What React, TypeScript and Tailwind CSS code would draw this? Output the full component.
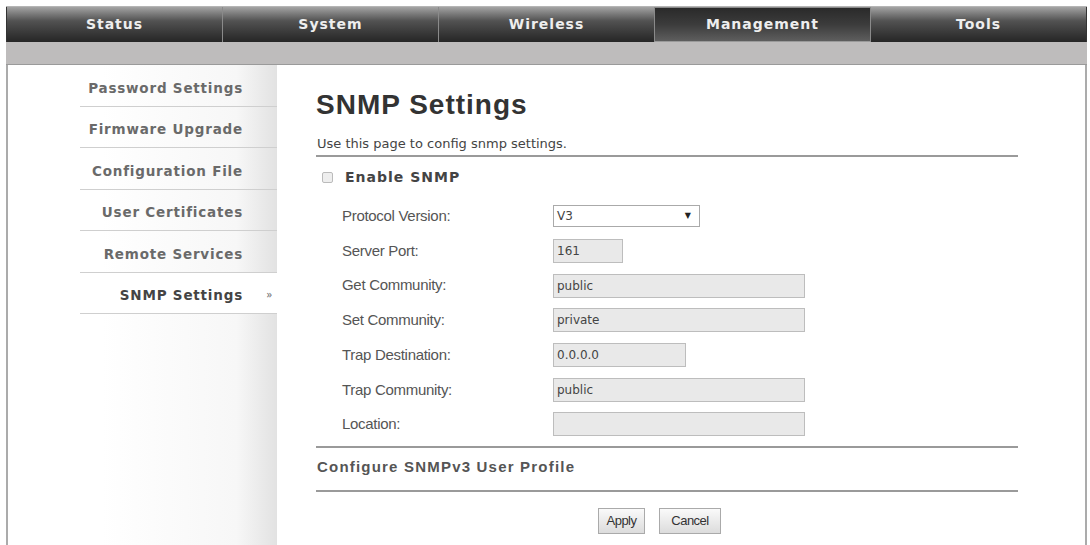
import React from "react";

const tabs = ["Status", "System", "Wireless", "Management", "Tools"];
const side = [
  "Password Settings",
  "Firmware Upgrade",
  "Configuration File",
  "User Certificates",
  "Remote Services",
  "SNMP Settings",
];

function Field({ w, value }: { w: string; value: string }) {
  return (
    <div
      className={`${w} h-[24px] bg-[#e9e9e9] border border-[#bdbdbd] flex items-center pl-[3px] text-[12px] text-[#444]`}
      style={{ fontFamily: '"DejaVu Sans", Verdana, sans-serif' }}
    >
      {value}
    </div>
  );
}

export default function App() {
  const rows: { label: string; node: React.ReactNode }[] = [
    {
      label: "Protocol Version:",
      node: (
        <div
          className="w-[147px] h-[22px] bg-white border border-[#aaa] flex items-center justify-between pl-[3px] pr-[8px] text-[12px] text-[#444]"
          style={{ fontFamily: '"DejaVu Sans", Verdana, sans-serif' }}
        >
          <span>V3</span>
          <span className="text-[8px] text-[#222]">▼</span>
        </div>
      ),
    },
    { label: "Server Port:", node: <Field w="w-[70px]" value="161" /> },
    { label: "Get Community:", node: <Field w="w-[252px]" value="public" /> },
    { label: "Set Community:", node: <Field w="w-[252px]" value="private" /> },
    { label: "Trap Destination:", node: <Field w="w-[133px]" value="0.0.0.0" /> },
    { label: "Trap Community:", node: <Field w="w-[252px]" value="public" /> },
    { label: "Location:", node: <Field w="w-[252px]" value="" /> },
  ];

  return (
    <div className="w-[1090px] h-[545px] bg-white overflow-hidden pt-[6px] pl-[6px]">
      <div className="w-[1081px]">
        {/* top nav */}
        <div className="h-[36px] border-t border-[#b5b5b5] px-[1px] flex bg-[#333]">
          {tabs.map((t, i) => {
            const active = t === "Management";
            return (
              <div
                key={t}
                className={
                  active
                    ? "flex-1 flex items-center justify-center bg-linear-to-b from-[#2a2a2a] via-[#3c3c3c] to-[#5e5e5e] border border-[#8a8a8a] border-b-[#9a9a9a]"
                    : `flex-1 flex items-center justify-center bg-linear-to-b from-[#a4a4a4] via-[#525252] via-40% to-[#262626] ${
                        i < tabs.length - 1 && tabs[i + 1] !== "Management" ? "border-r border-[#8a8a8a]" : ""
                      }`
                }
              >
                <span
                  className="text-[14px] font-bold text-[#eeeeee] tracking-[1px]"
                  style={{ fontFamily: '"DejaVu Sans", Verdana, sans-serif' }}
                >
                  {t}
                </span>
              </div>
            );
          })}
        </div>
        {/* gray bar */}
        <div className="h-[23px] bg-[#bebcbc] border-b border-[#9a9a9a]" />
        {/* body */}
        <div className="h-[481px] border-l-2 border-r-2 border-[#ababab] flex">
          {/* sidebar */}
          <div className="w-[269px] h-full bg-linear-to-r from-white from-35% via-[#f7f7f7] via-85% to-[#e2e2e2]">
            {side.map((s) => {
              const active = s === "SNMP Settings";
              return (
                <div
                  key={s}
                  className={`ml-[72px] w-[197px] h-[41.5px] pt-[5px] border-b border-[#cfcfcf] flex items-center justify-end pr-[34px] relative ${
                    active ? "bg-white" : ""
                  }`}
                >
                  <span
                    className={`text-[13.5px] font-bold tracking-[0.8px] ${active ? "text-[#444]" : "text-[#6a6a6a]"}`}
                    style={{ fontFamily: '"DejaVu Sans", Verdana, sans-serif' }}
                  >
                    {s}
                  </span>
                  {active && (
                    <span className="absolute right-[5px] top-[13px] text-[11px] text-[#777]">»</span>
                  )}
                </div>
              );
            })}
          </div>
          {/* main */}
          <div className="ml-[39px] w-[702px] pt-[24px]">
            <div
              className="h-[32px] leading-[32px] text-[28px] font-bold text-[#333] tracking-[1px]"
              style={{ fontFamily: '"Liberation Sans", Arial, sans-serif' }}
            >
              SNMP Settings
            </div>
            <div
              className="mt-[15px] h-[16px] leading-[16px] text-[13px] text-[#444] pl-[1px]"
              style={{ fontFamily: '"DejaVu Sans", Verdana, sans-serif' }}
            >
              Use this page to config snmp settings.
            </div>
            <div className="mt-[3px] h-[2px] bg-[#9a9a9a]" />
            <div className="mt-[10px] h-[20px] flex items-center pl-[6px]">
              <div className="w-[11px] h-[11px] border border-[#bbb] bg-[#eee] rounded-[2px]" />
              <span
                className="ml-[12px] text-[14px] font-bold text-[#444] tracking-[1px]"
                style={{ fontFamily: '"DejaVu Sans", Verdana, sans-serif' }}
              >
                Enable SNMP
              </span>
            </div>
            <div className="mt-[12px] pl-[26px]">
              {rows.map((r) => (
                <div key={r.label} className="h-[34.7px] flex items-center">
                  <div
                    className="w-[211px] text-[15px] text-[#555] tracking-[-0.3px]"
                    style={{ fontFamily: '"Liberation Sans", Arial, sans-serif' }}
                  >
                    {r.label}
                  </div>
                  {r.node}
                </div>
              ))}
            </div>
            <div className="mt-[4px] h-[2px] bg-[#9a9a9a]" />
            <div className="h-[42px] flex items-center pb-[4px] pl-[1px]">
              <span
                className="text-[15px] font-bold text-[#555] tracking-[1.2px]"
                style={{ fontFamily: '"Liberation Sans", Arial, sans-serif' }}
              >
                Configure SNMPv3 User Profile
              </span>
            </div>
            <div className="h-[2px] bg-[#9a9a9a]" />
            <div className="mt-[16px] flex gap-[14px] pl-[282px]">
              <button
                className="w-[47px] h-[26px] border border-[#aaa] bg-linear-to-b from-[#fafafa] to-[#dcdcdc] text-[13px] text-[#333] tracking-[-0.5px]"
                style={{ fontFamily: '"Liberation Sans", Arial, sans-serif' }}
              >
                Apply
              </button>
              <button
                className="w-[62px] h-[26px] border border-[#aaa] bg-linear-to-b from-[#fafafa] to-[#dcdcdc] text-[13px] text-[#333] tracking-[-0.5px]"
                style={{ fontFamily: '"Liberation Sans", Arial, sans-serif' }}
              >
                Cancel
              </button>
            </div>
          </div>
        </div>
      </div>
    </div>
  );
}
